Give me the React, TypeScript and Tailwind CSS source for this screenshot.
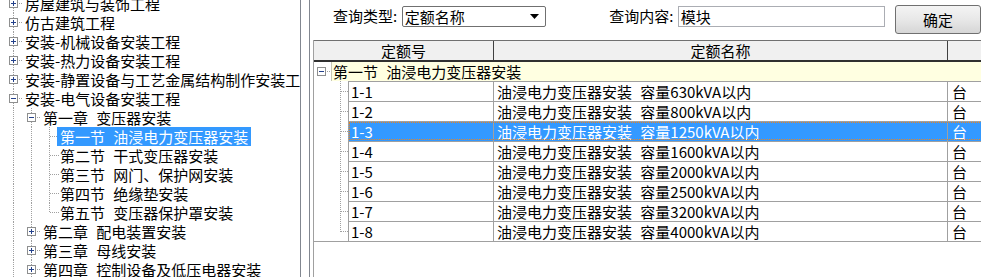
import React from "react";

type Kind = "blank" | "line" | "tee" | "end" | "plus" | "minus";

const DOT = "#a0a0a0";
const FONT = "font-['Noto_Sans_CJK_SC','Noto_Sans',sans-serif]";

function Gutter({ kind, last }: { kind: Kind; last?: boolean }) {
  // one 18x19 cell of the tree guide, centre at x=8.5 / y=9.5
  const dash = "1 1";
  return (
    <svg width="18" height="19" className="block shrink-0">
      {kind === "line" && <line x1="8.5" y1="0" x2="8.5" y2="19" stroke={DOT} strokeDasharray={dash} />}
      {(kind === "tee" || kind === "end") && (
        <>
          <line x1="8.5" y1="0" x2="8.5" y2={kind === "tee" ? 19 : 10} stroke={DOT} strokeDasharray={dash} />
          <line x1="9" y1="9.5" x2="18" y2="9.5" stroke={DOT} strokeDasharray={dash} />
        </>
      )}
      {(kind === "plus" || kind === "minus") && (
        <>
          {!last && <line x1="8.5" y1="14" x2="8.5" y2="19" stroke={DOT} strokeDasharray={dash} />}
          <line x1="8.5" y1="0" x2="8.5" y2="5" stroke={DOT} strokeDasharray={dash} />
          <line x1="14" y1="9.5" x2="18" y2="9.5" stroke={DOT} strokeDasharray={dash} />
          <rect x="4.5" y="5.5" width="8" height="8" fill="#fff" stroke="#8e8f8f" />
          <line x1="6" y1="9.5" x2="11" y2="9.5" stroke="#24418b" />
          {kind === "plus" && <line x1="8.5" y1="7" x2="8.5" y2="12" stroke="#24418b" />}
        </>
      )}
    </svg>
  );
}

const tree: { text: string; cells: Kind[]; leaf?: boolean; selected?: boolean }[] = [
  { text: "房屋建筑与装饰工程", cells: ["plus"] },
  { text: "仿古建筑工程", cells: ["plus"] },
  { text: "安装-机械设备安装工程", cells: ["plus"] },
  { text: "安装-热力设备安装工程", cells: ["plus"] },
  { text: "安装-静置设备与工艺金属结构制作安装工程", cells: ["plus"] },
  { text: "安装-电气设备安装工程", cells: ["minus"] },
  { text: "第一章 变压器安装", cells: ["line", "minus"] },
  { text: "第一节 油浸电力变压器安装", cells: ["line", "line", "tee"], leaf: true, selected: true },
  { text: "第二节 干式变压器安装", cells: ["line", "line", "tee"], leaf: true },
  { text: "第三节 网门、保护网安装", cells: ["line", "line", "tee"], leaf: true },
  { text: "第四节 绝缘垫安装", cells: ["line", "line", "tee"], leaf: true },
  { text: "第五节 变压器保护罩安装", cells: ["line", "line", "end"], leaf: true },
  { text: "第二章 配电装置安装", cells: ["line", "plus"] },
  { text: "第三章 母线安装", cells: ["line", "plus"] },
  { text: "第四章 控制设备及低压电器安装", cells: ["line", "plus"] },
];

const rows = [
  { code: "1-1", name: "油浸电力变压器安装 容量630kVA以内" },
  { code: "1-2", name: "油浸电力变压器安装 容量800kVA以内" },
  { code: "1-3", name: "油浸电力变压器安装 容量1250kVA以内", selected: true },
  { code: "1-4", name: "油浸电力变压器安装 容量1600kVA以内" },
  { code: "1-5", name: "油浸电力变压器安装 容量2000kVA以内" },
  { code: "1-6", name: "油浸电力变压器安装 容量2500kVA以内" },
  { code: "1-7", name: "油浸电力变压器安装 容量3200kVA以内" },
  { code: "1-8", name: "油浸电力变压器安装 容量4000kVA以内" },
];

function RowGutter({ last }: { last: boolean }) {
  return (
    <svg width="34" height="20" className="block shrink-0">
      <line x1="26.5" y1="0" x2="26.5" y2={last ? 11 : 20} stroke={DOT} strokeDasharray="1 1" />
      <line x1="27" y1="10.5" x2="34" y2="10.5" stroke={DOT} strokeDasharray="1 1" />
    </svg>
  );
}

export default function App() {
  return (
    <div className={`flex h-[277px] w-[981px] overflow-hidden bg-white text-[15px] text-black ${FONT} [word-spacing:5px]`}>
      {/* left: quota library tree */}
      <div className="w-[301px] shrink-0 overflow-hidden border-r border-[#828790]">
        <div className="-mt-[6px] pl-[5px]">
          {tree.map((t) => (
            <div key={t.text} className="flex h-[19px] items-center whitespace-nowrap">
              {t.cells.map((c, i) => (
                <Gutter key={i} kind={c} />
              ))}
              <span
                className={`h-[19px] leading-[19px] ${t.leaf ? "-ml-[2px] pl-[3px] pr-[3px]" : "px-[2px]"} ${
                  t.selected ? "bg-[#3399ff] text-white" : ""
                }`}
              >
                {t.text}
              </span>
            </div>
          ))}
        </div>
      </div>

      {/* right: search + result grid */}
      <div className="ml-[8px] flex min-w-0 flex-1 flex-col border-l border-[#828790]">
        <div className="flex h-[40px] shrink-0 items-start">
          <span className="ml-[23px] mt-[6px] w-[70px] leading-[19px]">查询类型:</span>
          <div className="mt-[6px] flex h-[21px] w-[147px] items-center justify-between rounded-[2px] border border-[#707070] bg-white pl-[2px] pr-[6px]">
            <span className="leading-[19px]">定额名称</span>
            <svg width="9" height="5" className="block">
              <polygon points="0,0 9,0 4.5,5" fill="#000" />
            </svg>
          </div>
          <span className="ml-[63px] mt-[6px] w-[70px] leading-[19px]">查询内容:</span>
          <div className="mt-[6px] h-[21px] w-[211px] border border-[#abadb3] bg-white pl-[2px] leading-[19px]">模块</div>
          <button className="ml-[10px] mt-[5px] h-[29px] w-[86px] shrink-0 rounded-[3px] border border-[#707070] bg-gradient-to-b from-[#f4f4f4] via-[#e8e8e8] to-[#d6d6d6] pb-[1px] text-[15px] leading-[19px]">
            确定
          </button>
        </div>

        <div className="ml-[3px] flex flex-1 flex-col border-l border-[#a0a0a0]">
          {/* header */}
          <div className="flex h-[22px] shrink-0 border-b-2 border-t border-b-[#303030] border-t-[#707070] bg-[#f0f0f0]">
            <div className="w-[179px] shrink-0 text-center leading-[19px]">定额号</div>
            <div className="w-[454px] shrink-0 border-l border-[#404040] text-center leading-[19px]">定额名称</div>
            <div className="w-[80px] shrink-0 border-l border-[#404040]" />
          </div>

          {/* group row */}
          <div className="flex h-[19px] shrink-0">
            <svg width="17" height="19" className="block shrink-0">
              <rect x="3.5" y="5.5" width="8" height="8" fill="#fff" stroke="#8e8f8f" />
              <line x1="5" y1="9.5" x2="10" y2="9.5" stroke="#24418b" />
              <line x1="13" y1="9.5" x2="17" y2="9.5" stroke={DOT} strokeDasharray="1 1" />
            </svg>
            <div className="w-[700px] shrink-0 whitespace-nowrap border-l border-[#c8c8b4] bg-[#ffffe1] pl-[1px] leading-[19px]">
              第一节 油浸电力变压器安装
            </div>
          </div>

          {/* items */}
          <div className="shrink-0 border-b border-[#a0a0a0]">
            {rows.map((r, i) => (
              <div key={r.code} className="flex h-[20px]">
                <RowGutter last={i === rows.length - 1} />
                <div
                  className={`flex shrink-0 border-t border-[#a0a0a0] ${
                    r.selected ? "bg-[#3399ff] text-white outline-1 -outline-offset-2 outline-dotted outline-[#e8831f]" : ""
                  }`}
                >
                  <div className="w-[145px] border-l border-[#a0a0a0] pl-[2px] leading-[19px]">{r.code}</div>
                  <div className="w-[454px] whitespace-nowrap border-l border-[#a0a0a0] pl-[3px] leading-[19px]">{r.name}</div>
                  <div className="w-[80px] border-l border-[#a0a0a0] pl-[4px] leading-[19px]">台</div>
                </div>
              </div>
            ))}
          </div>
        </div>
      </div>
    </div>
  );
}
